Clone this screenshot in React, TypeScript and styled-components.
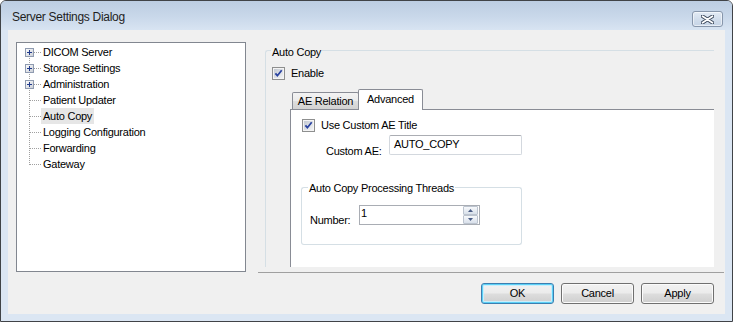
import React from 'react';
import styled, { createGlobalStyle, css } from 'styled-components';

const GlobalStyle = createGlobalStyle`
  html, body {
    margin: 0;
    padding: 0;
    background: #ffffff;
  }
  body {
    font-family: "Liberation Sans", Arial, sans-serif;
    font-size: 11px;
    letter-spacing: -0.25px;
    color: #000;
  }
  * {
    box-sizing: border-box;
  }
`;

const GB_LINE = '#d5dfe5';
const TAB_LINE = '#898c95';

/* ---------- window frame ---------- */

const Window = styled.div`
  width: 733px;
  height: 322px;
  border: 1px solid #404347;
  border-radius: 6px 6px 0 0;
  background: #dbe6f3;
  display: flex;
  flex-direction: column;
  overflow: hidden;
`;

const TitleBar = styled.div`
  flex: none;
  height: 29px;
  display: flex;
  align-items: flex-start;
  justify-content: space-between;
  padding: 0 9px 0 11px;
  background: linear-gradient(to bottom, #bccde2 0%, #c9d8ea 55%, #d8e4f2 100%);
`;

const Title = styled.div`
  margin-top: 9px;
  font-size: 12px;
  line-height: 15px;
  letter-spacing: -0.3px;
  color: #1e1e1e;
`;

const CloseButton = styled.div`
  margin-top: 10px;
  width: 31px;
  height: 16px;
  border: 1px solid #8796ab;
  border-radius: 3px;
  background: linear-gradient(to bottom, #e3ebf5 0%, #d2deec 50%, #c6d4e6 100%);
  box-shadow: inset 0 0 0 1px rgba(255, 255, 255, 0.55);
  display: flex;
  align-items: center;
  justify-content: center;
`;

const Client = styled.div`
  flex: 1;
  margin: 0 7px 7px;
  padding: 12px 0 0 8px;
  background: #f0f0f0;
  display: flex;
  flex-direction: column;
`;

const TopRow = styled.div`
  display: flex;
  height: 231px;
`;

/* ---------- tree ---------- */

const Tree = styled.div`
  width: 230px;
  height: 230px;
  border: 1px solid #828790;
  background: #fff;
  padding-top: 1px;
`;

const TreeRow = styled.div`
  display: flex;
  align-items: center;
  height: 16px;
`;

const TreeLabel = styled.span<{ $selected?: boolean }>`
  line-height: 16px;
  padding: 0 2px;
  white-space: nowrap;
  background: ${p => (p.$selected ? '#e6e6e6' : 'transparent')};
`;

/* ---------- right side ---------- */

const RightColumn = styled.div`
  margin-left: 12px;
  width: 466px;
  display: flex;
  flex-direction: column;
`;

const Panel = styled.div`
  width: 456px;
  height: 225px;
  overflow: hidden;
`;

const Separator = styled.div`
  margin-top: 5px;
  height: 1px;
  background: #a0a0a0;
`;

const Group = styled.div<{ $width: number }>`
  width: ${p => p.$width}px;
  display: flex;
  flex-direction: column;
`;

const AutoCopyGroup = styled(Group)`
  margin: 4px 0 0 7px;
`;

const GroupHead = styled.div`
  display: flex;
  align-items: flex-start;
  height: 13px;
`;

const HeadLeft = styled.div<{ $indent: number; $drop: number }>`
  flex: none;
  width: ${p => p.$indent}px;
  margin-top: ${p => p.$drop}px;
  height: ${p => 13 - p.$drop}px;
  border-top: 1px solid ${GB_LINE};
  border-left: 1px solid ${GB_LINE};
  border-top-left-radius: 3px;
`;

const HeadText = styled.span`
  line-height: 13px;
  padding: 0 1px;
  white-space: nowrap;
`;

const HeadRight = styled.div<{ $drop: number; $boxed?: boolean }>`
  flex: 1;
  margin-top: ${p => p.$drop}px;
  height: ${p => 13 - p.$drop}px;
  border-top: 1px solid ${GB_LINE};
  ${p =>
    p.$boxed &&
    css`
      border-right: 1px solid ${GB_LINE};
      border-top-right-radius: 3px;
    `}
`;

const GroupBody = styled.div<{ $boxed?: boolean }>`
  border-left: 1px solid ${GB_LINE};
  ${p =>
    p.$boxed &&
    css`
      border-right: 1px solid ${GB_LINE};
      border-bottom: 1px solid ${GB_LINE};
      border-radius: 0 0 3px 3px;
    `}
`;

const AutoCopyBody = styled(GroupBody)`
  padding: 8px 0 0 6px;
`;

const ThreadsBody = styled(GroupBody)`
  padding: 10px 0 17px 8px;
`;

const CheckRow = styled.div`
  display: flex;
  align-items: center;
  gap: 6px;
  height: 13px;
  line-height: 13px;
`;

/* ---------- tabs ---------- */

const TabControl = styled.div`
  margin: 9px 0 0 18px;
`;

const TabStrip = styled.div`
  display: flex;
  align-items: flex-end;
  height: 20px;
  padding-left: 2px;
`;

const Tab = styled.div<{ $active?: boolean }>`
  width: 67px;
  height: 17px;
  border: 1px solid ${TAB_LINE};
  border-bottom: none;
  border-radius: 2px 2px 0 0;
  background: linear-gradient(to bottom, #f3f3f3 0%, #ebebeb 50%, #dedede 51%, #d2d2d2 100%);
  display: flex;
  align-items: center;
  justify-content: center;
  line-height: 13px;
  white-space: nowrap;
  ${p =>
    p.$active &&
    css`
      position: relative;
      z-index: 1;
      width: 65px;
      height: 21px;
      margin-left: -1px;
      margin-bottom: -1px;
      padding-bottom: 2px;
      background: #fff;
    `}
`;

const TabPage = styled.div`
  width: 440px;
  border-left: 1px solid ${TAB_LINE};
  border-top: 1px solid ${TAB_LINE};
  background: #fff;
  padding: 9px 0 30px 11px;
`;

const FieldRow = styled.div<{ $indent: number; $top: number }>`
  display: flex;
  align-items: flex-start;
  margin: ${p => p.$top}px 0 0 ${p => p.$indent}px;
`;

const FieldLabel = styled.div<{ $width: number; $drop: number }>`
  width: ${p => p.$width}px;
  padding-top: ${p => p.$drop}px;
  line-height: 13px;
  white-space: nowrap;
`;

const TextBox = styled.div`
  width: 133px;
  height: 20px;
  border: 1px solid #d3d8de;
  border-top-color: #abadb3;
  border-radius: 2px;
  padding: 2px 4px 0;
  line-height: 13px;
  background: #fff;
`;

const ThreadsGroup = styled(Group)`
  margin: 24px 0 0 -1px;
`;

const SpinBox = styled.div`
  width: 121px;
  height: 20px;
  border: 1px solid #a9adb4;
  display: flex;
  background: #fff;
`;

const SpinText = styled.div`
  flex: 1;
  padding: 1px 0 0 1px;
  line-height: 13px;
`;

const SpinButtons = styled.div`
  width: 15px;
  margin-right: 1px;
  display: flex;
  flex-direction: column;
`;

const SpinButton = styled.div`
  height: 9px;
  border: 1px solid #bcc4cf;
  border-radius: 1px;
  background: linear-gradient(to bottom, #f7f9fb 0%, #e6ebf2 55%, #d8e0ea 100%);
  display: flex;
  align-items: center;
  justify-content: center;
`;

/* ---------- footer ---------- */

const Footer = styled.div`
  margin-top: 10px;
  display: flex;
  justify-content: flex-end;
  gap: 7px;
  padding-right: 11px;
`;

const DialogButton = styled.div<{ $default?: boolean }>`
  width: 73px;
  height: 21px;
  border: 1px solid #707070;
  border-radius: 3px;
  background: linear-gradient(to bottom, #f2f2f2 0%, #ebebeb 48%, #dddddd 52%, #cfcfcf 100%);
  box-shadow: inset 0 0 0 1px #fbfbfb;
  display: flex;
  align-items: center;
  justify-content: center;
  line-height: 13px;
  ${p =>
    p.$default &&
    css`
      border-color: #3c7fb1;
      box-shadow: inset 0 0 0 1px #5bd0f6, inset 0 0 0 2px #c9eefc;
    `}
`;

/* ---------- drawings ---------- */

const CloseGlyph = () => (
  <svg width="13" height="9" viewBox="0 0 13 9">
    <path d="M1.5 1.2 L11.5 7.8 M11.5 1.2 L1.5 7.8" stroke="#3e4b5e" strokeWidth="3.6" strokeLinecap="round" />
    <path d="M1.5 1.2 L11.5 7.8 M11.5 1.2 L1.5 7.8" stroke="#ffffff" strokeWidth="1.7" strokeLinecap="round" />
  </svg>
);

const CheckBox = () => (
  <svg width="13" height="13" viewBox="0 0 13 13" style={{ flex: 'none' }}>
    <defs>
      <linearGradient id="cbFill" x1="0" y1="0" x2="1" y2="1">
        <stop offset="0" stopColor="#c3c9d2" />
        <stop offset="1" stopColor="#f2f3f5" />
      </linearGradient>
    </defs>
    <rect x="0.5" y="0.5" width="12" height="12" fill="#f4f4f4" stroke="#8e8f8f" />
    <rect x="2" y="2" width="9" height="9" fill="url(#cbFill)" />
    <path d="M3.4 6.3 L5.4 8.7 L9.7 3.3" fill="none" stroke="#2a43a0" strokeWidth="1.8" />
  </svg>
);

const TreeGlyph = ({ expandable, first, last }: { expandable?: boolean; first?: boolean; last?: boolean }) => (
  <svg width="24" height="16" viewBox="0 0 24 16" shapeRendering="crispEdges" style={{ flex: 'none' }}>
    <defs>
      <linearGradient id="pbFill" x1="0" y1="0" x2="1" y2="1">
        <stop offset="0" stopColor="#ffffff" />
        <stop offset="1" stopColor="#c8ccd4" />
      </linearGradient>
    </defs>
    <line x1="12.5" y1={first ? 8 : 0} x2="12.5" y2={last ? 9 : 16} stroke="#a0a0a0" strokeDasharray="1 1" />
    <line x1={expandable ? 17 : 13} y1="8.5" x2="24" y2="8.5" stroke="#a0a0a0" strokeDasharray="1 1" />
    {expandable && (
      <>
        <rect x="8.5" y="4.5" width="8" height="8" fill="url(#pbFill)" stroke="#8f9bb0" />
        <path d="M10 8.5h5M12.5 6v5" stroke="#1f3a8c" />
      </>
    )}
  </svg>
);

const Arrow = ({ up }: { up?: boolean }) => (
  <svg width="5" height="3" viewBox="0 0 5 3">
    <path d={up ? 'M0 3 L2.5 0 L5 3 Z' : 'M0 0 L5 0 L2.5 3 Z'} fill="#4a5d86" />
  </svg>
);

/* ---------- data ---------- */

interface TreeItem {
  label: string;
  expandable?: boolean;
  selected?: boolean;
}

const treeItems: TreeItem[] = [
  { label: 'DICOM Server', expandable: true },
  { label: 'Storage Settings', expandable: true },
  { label: 'Administration', expandable: true },
  { label: 'Patient Updater' },
  { label: 'Auto Copy', selected: true },
  { label: 'Logging Configuration' },
  { label: 'Forwarding' },
  { label: 'Gateway' },
];

export default function App() {
  return (
    <>
      <GlobalStyle />
      <Window>
        <TitleBar>
          <Title>Server Settings Dialog</Title>
          <CloseButton>
            <CloseGlyph />
          </CloseButton>
        </TitleBar>

        <Client>
          <TopRow>
            <Tree>
              {treeItems.map((item, i) => (
                <TreeRow key={item.label}>
                  <TreeGlyph expandable={item.expandable} first={i === 0} last={i === treeItems.length - 1} />
                  <TreeLabel $selected={item.selected}>{item.label}</TreeLabel>
                </TreeRow>
              ))}
            </Tree>

            <RightColumn>
              <Panel>
                <AutoCopyGroup $width={460}>
                  <GroupHead>
                    <HeadLeft $indent={6} $drop={4} />
                    <HeadText>Auto Copy</HeadText>
                    <HeadRight $drop={4} />
                  </GroupHead>
                  <AutoCopyBody>
                    <CheckRow>
                      <CheckBox />
                      <span>Enable</span>
                    </CheckRow>

                    <TabControl>
                      <TabStrip>
                        <Tab>AE Relation</Tab>
                        <Tab $active>Advanced</Tab>
                      </TabStrip>
                      <TabPage>
                        <CheckRow>
                          <CheckBox />
                          <span>Use Custom AE Title</span>
                        </CheckRow>

                        <FieldRow $indent={24} $top={3}>
                          <FieldLabel $width={63} $drop={10}>Custom AE:</FieldLabel>
                          <TextBox>AUTO_COPY</TextBox>
                        </FieldRow>

                        <ThreadsGroup $width={221}>
                          <GroupHead>
                            <HeadLeft $indent={7} $drop={5} />
                            <HeadText>Auto Copy Processing Threads</HeadText>
                            <HeadRight $drop={5} $boxed />
                          </GroupHead>
                          <ThreadsBody $boxed>
                            <FieldRow $indent={0} $top={0}>
                              <FieldLabel $width={49} $drop={9}>Number:</FieldLabel>
                              <SpinBox>
                                <SpinText>1</SpinText>
                                <SpinButtons>
                                  <SpinButton>
                                    <Arrow up />
                                  </SpinButton>
                                  <SpinButton>
                                    <Arrow />
                                  </SpinButton>
                                </SpinButtons>
                              </SpinBox>
                            </FieldRow>
                          </ThreadsBody>
                        </ThreadsGroup>
                      </TabPage>
                    </TabControl>
                  </AutoCopyBody>
                </AutoCopyGroup>
              </Panel>
              <Separator />
            </RightColumn>
          </TopRow>

          <Footer>
            <DialogButton $default>OK</DialogButton>
            <DialogButton>Cancel</DialogButton>
            <DialogButton>Apply</DialogButton>
          </Footer>
        </Client>
      </Window>
    </>
  );
}
